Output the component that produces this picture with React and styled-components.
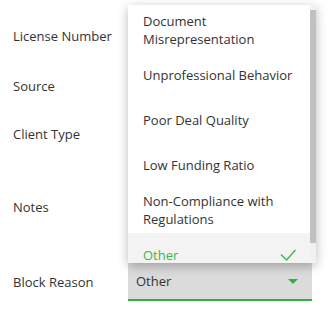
import styled, { createGlobalStyle } from "styled-components";

const GlobalStyle = createGlobalStyle`
  html, body {
    margin: 0;
    padding: 0;
    background: #fff;
  }
  body {
    font-family: "Open Sans", "Liberation Sans", sans-serif;
    font-size: 13px;
    color: #333;
  }
`;

const Form = styled.div`
  position: relative;
  width: 329px;
  height: 320px;
  overflow: hidden;
  box-sizing: border-box;
  padding: 12px 0 0 13px;
  display: grid;
  grid-template-columns: 115px 184px;
  grid-template-rows: 48px 52px 44px 102px 48px;
  align-items: center;
`;

const Label = styled.div`
  line-height: 18px;
  color: #333;
`;

const Field = styled.div`
  height: 38px;
  box-sizing: border-box;
  background: #dbdbdb;
  border-bottom: 2px solid ${(p) => (p.$active ? "#2eb33f" : "#c4c4c4")};
  display: flex;
  align-items: center;
  justify-content: space-between;
  padding: 0 14px 0 8px;
  color: #333;
`;

const Caret = styled.span`
  width: 0;
  height: 0;
  border-left: 5px solid transparent;
  border-right: 5px solid transparent;
  border-top: 5px solid #2eb33f;
`;

const Menu = styled.div`
  position: absolute;
  left: 128px;
  top: 5px;
  width: 188px;
  height: 258px;
  background: #fff;
  box-shadow: 0 3px 10px rgba(0, 0, 0, 0.28);
  display: flex;
  z-index: 2;
`;

const List = styled.div`
  flex: 1;
  overflow: hidden;
  padding-top: 2.5px;
`;

const Option = styled.div`
  height: 45px;
  box-sizing: border-box;
  padding: 0 14px 0 15px;
  display: flex;
  align-items: center;
  justify-content: space-between;
  line-height: 18px;
  background: ${(p) => (p.$selected ? "#f3f3f3" : "#fff")};
  color: ${(p) => (p.$selected ? "#3cb44b" : "#333")};
`;

const OptionText = styled.span`
  max-width: ${(p) => p.$max}px;
`;

const ScrollTrack = styled.div`
  width: 6px;
  background: #f1f1f1;
  padding-top: 5px;
  display: flex;
  flex-direction: column;
`;

const ScrollThumb = styled.div`
  height: 233px;
  background: #c1c1c1;
`;

const options = [
  "Document Misrepresentation",
  "Unprofessional Behavior",
  "Poor Deal Quality",
  "Low Funding Ratio",
  "Non-Compliance with Regulations",
  "Other",
];

const rows = ["License Number", "Source", "Client Type", "Notes", "Block Reason"];

export default function App() {
  const selected = "Other";
  return (
    <>
      <GlobalStyle />
      <Form>
        {rows.map((r) => (
          <>
            <Label key={r}>{r}</Label>
            {r === "Block Reason" ? (
              <Field $active>
                <span>{selected}</span>
                <Caret />
              </Field>
            ) : (
              <Field />
            )}
          </>
        ))}
        <Menu>
          <List>
            {options.map((o) => (
              <Option key={o} $selected={o === selected}>
                <OptionText $max={o.startsWith("Document") ? 120 : 140 + (o.startsWith("Unprof") ? 20 : 0)}>{o}</OptionText>
                {o === selected && (
                  <svg width="16" height="12" viewBox="0 0 16 12">
                    <polyline points="1,5.5 6.5,11 15.5,1" fill="none" stroke="#3cb44b" strokeWidth="1.3" />
                  </svg>
                )}
              </Option>
            ))}
          </List>
          <ScrollTrack>
            <ScrollThumb />
          </ScrollTrack>
        </Menu>
      </Form>
    </>
  );
}
